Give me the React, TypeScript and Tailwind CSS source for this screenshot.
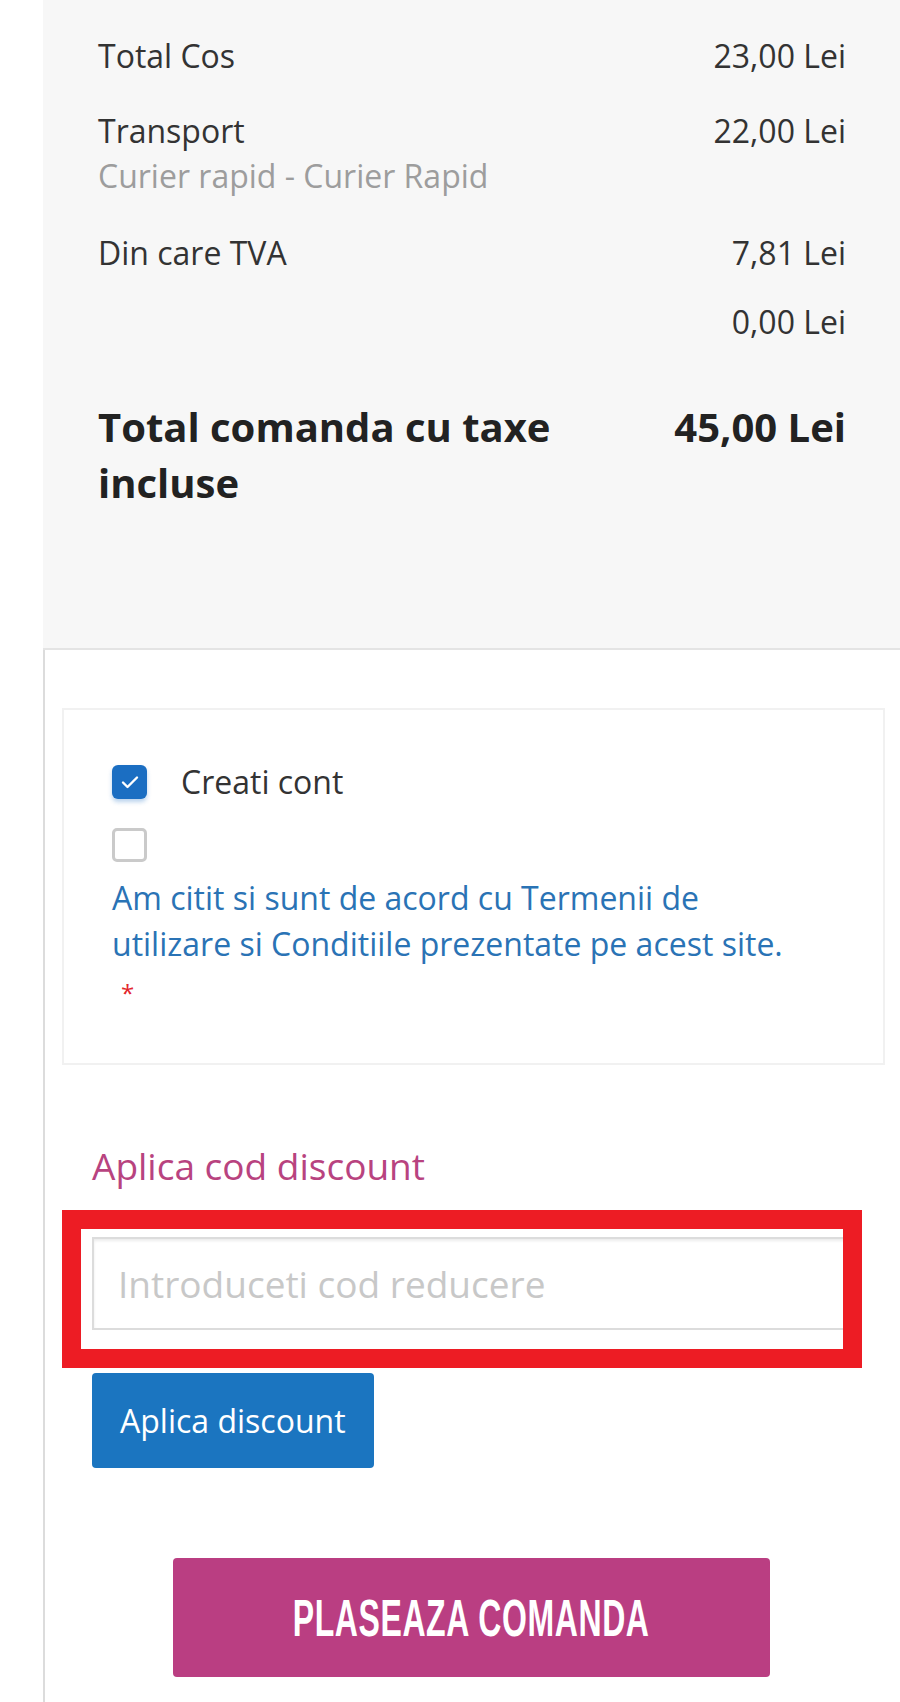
import React from "react";

function Row({ label, value, sub }: { label?: string; value: string; sub?: string }) {
  return (
    <div className="flex justify-between items-start">
      <div>
        <div>{label}</div>
        {sub && <div className="text-[#9d9d9d] leading-[46px]">{sub}</div>}
      </div>
      <div className="shrink-0">{value}</div>
    </div>
  );
}

export default function App() {
  return (
    <div className="min-h-[1702px] w-[900px] bg-white flex flex-col pl-[43px] font-['Open_Sans',sans-serif]">
      {/* order summary */}
      <div className="bg-[#f7f7f7] border-b-2 border-[#e4e4e4] pl-[55px] pr-[54px] pt-[34px] pb-[137px] text-[32px] leading-[44px] text-[#333]">
        <Row label="Total Cos" value="23,00 Lei" />
        <div className="mt-[31px]">
          <Row label="Transport" value="22,00 Lei" sub="Curier rapid - Curier Rapid" />
        </div>
        <div className="mt-[32px]">
          <Row label="Din care TVA" value="7,81 Lei" />
        </div>
        <div className="mt-[25px]">
          <Row value="0,00 Lei" />
        </div>
        <div className="mt-[55px] flex justify-between items-start text-[40px] leading-[56px] font-bold text-[#222]">
          <div className="flex-1 pr-[20px]">Total comanda cu taxe incluse</div>
          <div className="shrink-0">45,00 Lei</div>
        </div>
      </div>

      <div className="flex-1 border-l-2 border-[#dcdcdc] pl-[17px] pr-[15px] pt-[58px] flex flex-col">
        {/* account + terms */}
        <div className="border-2 border-[#f1f1f1] pt-[55px] pl-[48px] pr-[40px] pb-[47px]">
          <label className="flex items-center h-[34px] gap-[34px]">
            <span className="w-[35px] h-[34px] rounded-[6px] bg-[#1b6ec2] shadow-[0_3px_4px_rgba(27,110,194,0.3)] flex items-center justify-center">
              <svg width="18" height="14" viewBox="0 0 18 14" fill="none">
                <path d="M2 7.5l4.5 4.5L16 2.5" stroke="white" strokeWidth="2.4" strokeLinecap="round" strokeLinejoin="round" />
              </svg>
            </span>
            <span className="text-[32px] leading-[34px] text-[#333]">Creati cont</span>
          </label>
          <div className="mt-[29px] w-[35px] h-[34px] rounded-[5px] border-[3px] border-[#cacaca] bg-white" />
          <div className="mt-[13px] w-[700px] text-[32px] leading-[46px] text-[#2a73b5]">
            Am citit si sunt de acord cu Termenii de utilizare si Conditiile prezentate pe acest site.
          </div>
          <div className="text-[32px] leading-[46px]">
            <span className="pl-[9px] text-[24px] text-[#e3262c]">*</span>
          </div>
        </div>

        {/* discount */}
        <div className="mt-[76px] px-[30px] flex flex-col">
          <div className="text-[37px] leading-[50px] text-[#b8437f]">Aplica cod discount</div>
          <div className="relative mt-[46px]">
            <input
              type="text"
              placeholder="Introduceti cod reducere"
              className="w-full h-[93px] border-2 border-[#dcdcdc] px-[24px] text-[37px] text-[#333] placeholder:text-[#c8c8c8] shadow-[inset_0_2px_3px_rgba(0,0,0,0.08)] outline-none bg-white"
            />
            <div className="absolute left-[-30px] top-[-27px] w-[800px] h-[158px] border-[19px] border-[#ed1c24] pointer-events-none" />
          </div>
          <button className="mt-[43px] self-start h-[95px] px-[28px] bg-[#1b75c0] text-white text-[32px] rounded-[4px]">
            Aplica discount
          </button>
        </div>

        <button className="mt-[90px] ml-[111px] w-[597px] h-[119px] bg-[#ba3e82] rounded-[4px] flex items-center justify-center">
          <span className="inline-block font-['Liberation_Sans',sans-serif] font-bold text-[52px] leading-none tracking-[1px] text-white scale-x-[0.615]">
            PLASEAZA COMANDA
          </span>
        </button>
      </div>
    </div>
  );
}
